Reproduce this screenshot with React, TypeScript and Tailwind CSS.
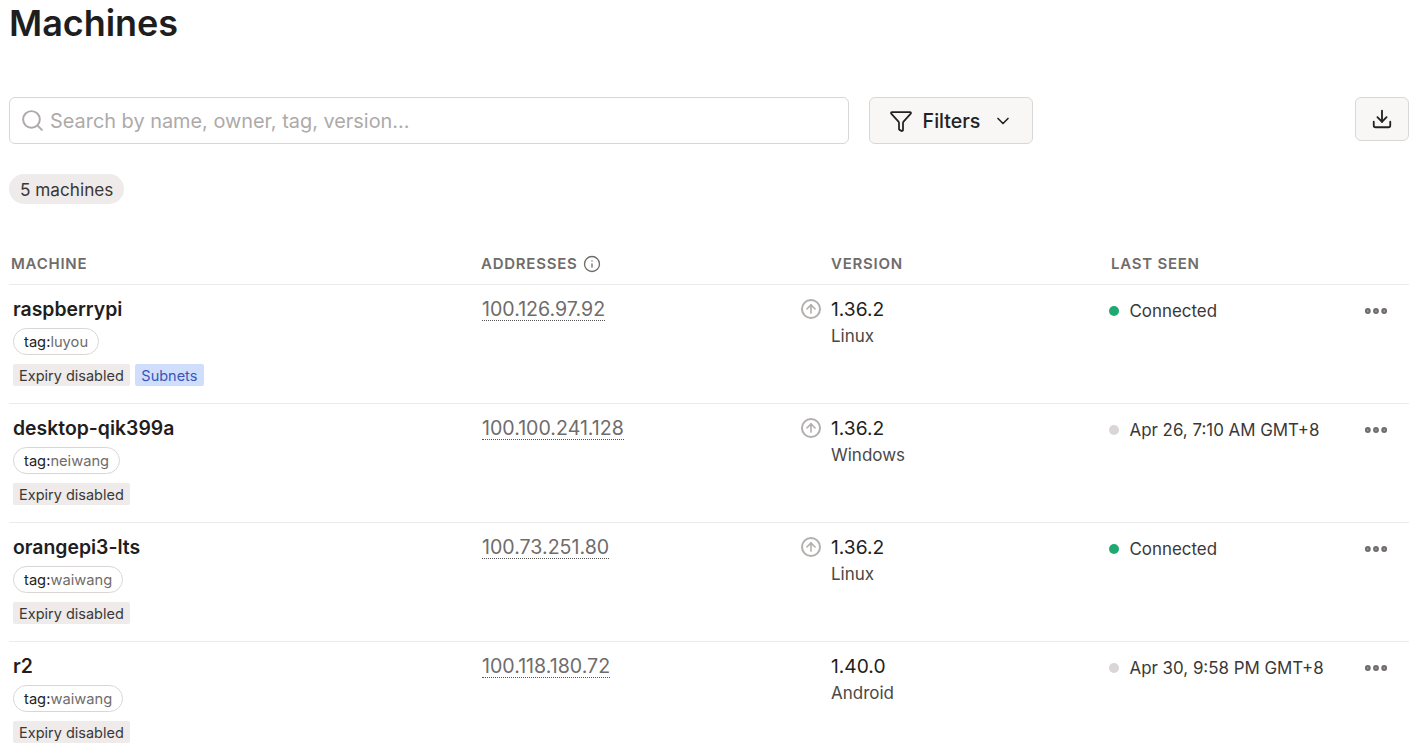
import { ChevronDown, Download, Ellipsis, Filter, Info, ArrowUp, Search } from 'lucide-react';

interface Machine {
  name: string;
  tag: string;
  subnets?: boolean;
  address: string;
  upgrade: boolean;
  version: string;
  os: string;
  connected: boolean;
  lastSeen: string;
}

const machines: Machine[] = [
  { name: 'raspberrypi', tag: 'luyou', subnets: true, address: '100.126.97.92', upgrade: true, version: '1.36.2', os: 'Linux', connected: true, lastSeen: 'Connected' },
  { name: 'desktop-qik399a', tag: 'neiwang', address: '100.100.241.128', upgrade: true, version: '1.36.2', os: 'Windows', connected: false, lastSeen: 'Apr 26, 7:10 AM GMT+8' },
  { name: 'orangepi3-lts', tag: 'waiwang', address: '100.73.251.80', upgrade: true, version: '1.36.2', os: 'Linux', connected: true, lastSeen: 'Connected' },
  { name: 'r2', tag: 'waiwang', address: '100.118.180.72', upgrade: false, version: '1.40.0', os: 'Android', connected: false, lastSeen: 'Apr 30, 9:58 PM GMT+8' },
];

function MachineRow({ machine }: { machine: Machine }) {
  return (
    <div className="grid h-[119px] grid-cols-[472px_350px_280px_1fr] border-t border-[#eceaea]">
      <div className="pl-1 pt-[13px]">
        <div className="text-[19.4px] leading-[22px] font-semibold text-[#1f1e1e]">{machine.name}</div>
        <div className="mt-[8px] flex">
          <span className="flex h-[27px] items-center rounded-full border border-[#dad6d5] px-[10px] pt-[2px] text-[14.7px] text-[#706c6b]">
            <span className="text-[#232222]">tag:</span>
            {machine.tag}
          </span>
        </div>
        <div className="mt-[9px] flex gap-[5px]">
          <span className="flex h-[22px] items-center rounded-[2px] bg-[#eeebea] px-[6px] pt-[2px] text-[14.5px] text-[#3a3837]">Expiry disabled</span>
          {machine.subnets && (
            <span className="flex h-[22px] items-center rounded-[2px] bg-[#cfdefd] px-[6.5px] pt-[2px] text-[14.5px] text-[#3b55b5]">Subnets</span>
          )}
        </div>
      </div>
      <div className="flex items-start justify-between pl-px pr-[10px] pt-[13px]">
        <span className="border-b border-dotted border-[#555] text-[19.6px] leading-[22px] text-[#706c6b]">{machine.address}</span>
        {machine.upgrade && (
          <span className="mt-px flex h-5 w-5 items-center justify-center rounded-full border-2 border-[#b3afae]">
            <ArrowUp size={14} strokeWidth={2.75} className="text-[#b3afae]" />
          </span>
        )}
      </div>
      <div className="pt-[13px]">
        <div className="text-[19.2px] leading-[22px] text-[#1f1e1e]">{machine.version}</div>
        <div className="mt-[5px] text-[17px] leading-[22px] text-[#4a4847]">{machine.os}</div>
      </div>
      <div className="flex items-start justify-between pr-[19px] pt-[15px]">
        <div className="-ml-[2px] flex items-center">
          <span className={machine.connected ? 'mr-[10.5px] h-[10px] w-[10px] rounded-full bg-[#1fa971]' : 'mr-[10.5px] h-[10px] w-[10px] rounded-full bg-[#d9d6d5]'} />
          <span className="text-[16.9px] leading-[22px] text-[#3a3837]">{machine.lastSeen}</span>
        </div>
        <Ellipsis size={28} strokeWidth={3} className="-mt-[3px] text-[#706c6b]" />
      </div>
    </div>
  );
}

export default function App() {
  return (
    <div className="h-[754px] w-[1423px] overflow-hidden bg-white pl-[9px] pr-[14px] font-['Inter',sans-serif]">
      <h1 className="pt-[3px] text-[36px] leading-[40px] font-semibold tracking-[-0.05px] text-[#1f1e1e]">Machines</h1>

      <div className="mt-[54px] flex items-start">
        <div className="flex h-[47px] w-[840px] items-center rounded-md border border-[#dad6d5] px-[10px]">
          <Search size={25} strokeWidth={1.9} className="text-[#aeaaa9]" />
          <span className="ml-[5px] pt-[2px] text-[19.9px] text-[#aeaaa9]">Search by name, owner, tag, version...</span>
        </div>
        <button className="ml-5 flex h-[47px] w-[164px] items-center justify-center rounded-md border border-[#dad6d5] bg-[#f9f7f6] text-[19.6px] font-medium text-[#232222]">
          <Filter size={24} strokeWidth={1.75} />
          <span className="ml-[10px] pt-[2px]">Filters</span>
          <ChevronDown size={20} strokeWidth={2} className="ml-[13px]" />
        </button>
        <button className="ml-auto flex h-[44px] w-[54px] items-center justify-center rounded-md border border-[#dad6d5] bg-[#f9f7f6] text-[#232222]">
          <Download size={22} strokeWidth={2} />
        </button>
      </div>

      <div className="mt-[30px] flex">
        <span className="flex h-[30px] items-center rounded-full bg-[#eeebea] px-[11px] pt-px text-[17.2px] text-[#3a3837]">5 machines</span>
      </div>

      <div className="mt-[38px] grid h-[42px] grid-cols-[472px_350px_280px_1fr] items-center pt-[2px] text-[15px] font-semibold tracking-[0.75px] text-[#706c6b]">
        <div className="pl-[2px]">MACHINE</div>
        <div className="flex items-center">
          ADDRESSES
          <Info size={18} strokeWidth={1.75} className="ml-[5px]" />
        </div>
        <div>VERSION</div>
        <div>LAST SEEN</div>
      </div>

      {machines.map((m) => (
        <MachineRow key={m.name} machine={m} />
      ))}
    </div>
  );
}
